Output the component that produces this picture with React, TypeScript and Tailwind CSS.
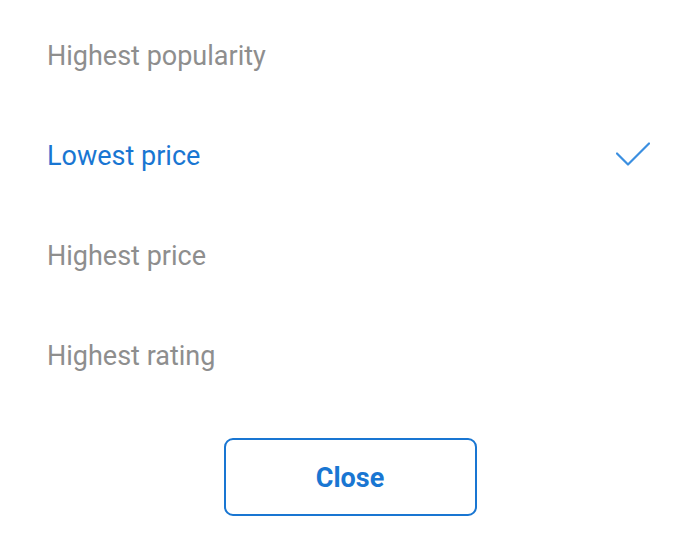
const options = [
  { label: 'Highest popularity', selected: false },
  { label: 'Lowest price', selected: true },
  { label: 'Highest price', selected: false },
  { label: 'Highest rating', selected: false },
];

export default function App() {
  return (
    <div className="w-[700px] h-[547px] bg-white font-['Roboto',sans-serif] flex flex-col pt-[6px]">
      <ul>
        {options.map((o) => (
          <li
            key={o.label}
            className={`h-[100px] flex items-center justify-between pl-[47px] pr-[50px] text-[27px] ${
              o.selected ? 'text-[#1976d2]' : 'text-[#8e8e8e]'
            }`}
          >
            <span>{o.label}</span>
            {o.selected && (
              <svg width="34" height="26" viewBox="0 0 34 26" fill="none" className="-mt-[2px]">
                <path
                  d="M1 11.5L12 22.5L33 1.5"
                  stroke="#3b8fe0"
                  strokeWidth={2.2}
                  strokeLinecap="round"
                  strokeLinejoin="round"
                />
              </svg>
            )}
          </li>
        ))}
      </ul>
      <div className="flex justify-center mt-[32px]">
        <button className="w-[253px] h-[78px] pt-[3px] border-2 border-[#1976d2] rounded-[9px] text-[#1976d2] text-[27px] font-bold">
          Close
        </button>
      </div>
    </div>
  );
}
